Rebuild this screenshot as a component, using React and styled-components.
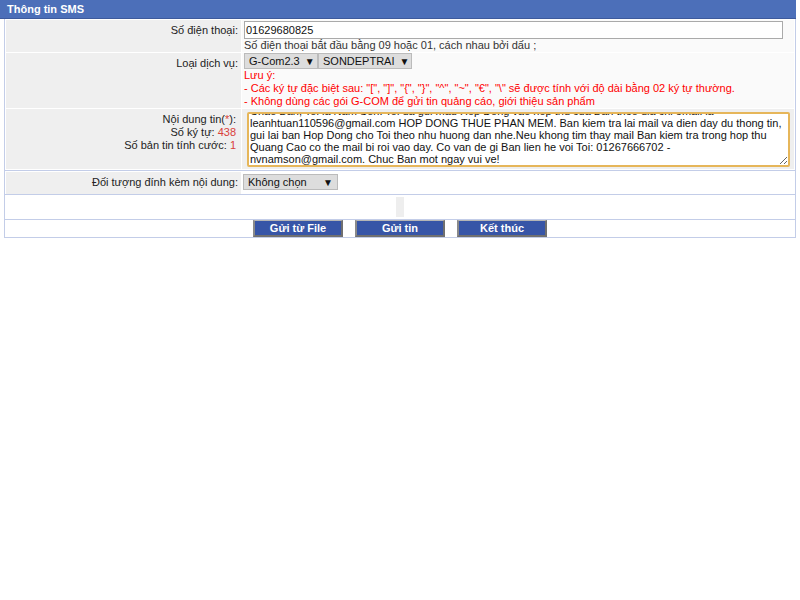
import React from 'react';
import styled, { createGlobalStyle } from 'styled-components';

const GlobalStyle = createGlobalStyle`
  body {
    margin: 0;
    background: #ffffff;
    font-family: 'Liberation Sans', Arial, sans-serif;
    font-size: 11px;
    color: #222;
  }
`;

const Header = styled.div`
  width: 796px;
  height: 19px;
  box-sizing: border-box;
  background-color: #4c6fb9;
  border-bottom: 1px solid #3d5a9c;
  color: #ffffff;
  font-weight: bold;
  font-size: 11px;
  line-height: 18px;
  padding-left: 7px;
`;

const Panel = styled.div`
  margin-left: 4px;
  width: 792px;
  box-sizing: border-box;
  border-left: 1px solid #c3cde8;
  border-right: 1px solid #c3cde8;
`;

const Section = styled.div`
  display: grid;
  grid-template-columns: 235px 1fr;
  gap: 1px;
  padding: ${(props) => props.pad || '1px'};
  border-bottom: 1px solid #c3cde8;
`;

const LabelCell = styled.div`
  background-color: #efefef;
  text-align: right;
  padding: ${(props) => props.pad || '4px 3px 0 0'};
  line-height: 13px;
`;

const ValueCell = styled.div`
  background-color: ${(props) => props.bg || '#fafafa'};
  padding: ${(props) => props.pad || '1px 0 0 2px'};
  line-height: 13px;
`;

const PhoneInput = styled.input`
  display: block;
  width: 539px;
  height: 18px;
  box-sizing: border-box;
  border: 1px solid #aaaaaa;
  padding: 0 1px;
  font-family: 'Liberation Sans', Arial, sans-serif;
  font-size: 11px;
  color: #111;
  background: #fff;
  outline: none;
`;

const Hint = styled.div`
  color: #333;
`;

const SelectRow = styled.div`
  display: flex;
`;

const FakeSelect = styled.div`
  display: flex;
  align-items: center;
  justify-content: space-between;
  gap: 5px;
  height: 16px;
  box-sizing: border-box;
  width: ${(props) => props.w}px;
  padding: 0 4px;
  background-color: #dddddd;
  border: 1px solid #bbbbbb;
  color: #111;
  font-size: 11px;
  white-space: nowrap;
`;

const Arrow = styled.span`
  font-size: 10px;
`;

const Warn = styled.div`
  color: #ff0000;
`;

const Red = styled.span`
  color: #d9413a;
`;

const MessageBox = styled.textarea`
  display: block;
  width: 543px;
  height: 55px;
  box-sizing: border-box;
  margin: 3px 0 0 5px;
  border: 2px solid #e6b65a;
  border-radius: 2px;
  padding: 1px 1px;
  font-family: 'Liberation Sans', Arial, sans-serif;
  font-size: 11px;
  line-height: 12px;
  color: #111;
  background: #fff;
  overflow: hidden;
  resize: both;
  outline: none;
  white-space: pre;
`;

const Spacer = styled.div`
  display: flex;
  justify-content: center;
  padding: 2px 0;
  border-bottom: 1px solid #c3cde8;
`;

const Blank = styled.div`
  width: 8px;
  height: 20px;
  background-color: #eeeeee;
`;

const ButtonBar = styled.div`
  display: flex;
  justify-content: center;
  gap: 12px;
  border-bottom: 1px solid #c3cde8;
`;

const Button = styled.button`
  width: 90px;
  height: 17px;
  box-sizing: border-box;
  padding: 0;
  background-color: #3755a7;
  color: #ffffff;
  font-family: 'Liberation Sans', Arial, sans-serif;
  font-weight: bold;
  font-size: 11px;
  border-style: solid;
  border-width: 1px 2px 2px 2px;
  border-color: #b5b5b5 #6f6f6f #707070 #8a8a8a;
  cursor: pointer;
`;

const specialChars = '- Các ký tự đặc biệt sau: "[", "]", "{", "}", "^", "~", "€", "\\" sẽ được tính với độ dài bằng 02 ký tự thường.';

const message =
  'Chao Ban, Toi la Nam Son. Toi da gui mau Hop Dong vao hop thu cua Ban theo dia chi email la\n' +
  'leanhtuan110596@gmail.com HOP DONG THUE PHAN MEM. Ban kiem tra lai mail va dien day du thong tin,\n' +
  'gui lai ban Hop Dong cho Toi theo nhu huong dan nhe.Neu khong tim thay mail Ban kiem tra trong hop thu\n' +
  'Quang Cao co the mail bi roi vao day. Co van de gi Ban lien he voi Toi: 01267666702 -\n' +
  'nvnamson@gmail.com. Chuc Ban mot ngay vui ve!';

function App() {
  const boxRef = React.useRef(null);

  React.useEffect(() => {
    if (boxRef.current) boxRef.current.scrollTop = 10;
  }, []);

  return (
    <>
      <GlobalStyle />
      <Header>Thông tin SMS</Header>
      <Panel>
        <Section>
          <LabelCell>Số điện thoại:</LabelCell>
          <ValueCell>
            <PhoneInput defaultValue="01629680825" />
            <Hint>Số điện thoại bắt đầu bằng 09 hoặc 01, cách nhau bởi dấu ;</Hint>
          </ValueCell>

          <LabelCell>Loại dịch vụ:</LabelCell>
          <ValueCell pad="0 0 0 2px">
            <SelectRow>
              <FakeSelect w={74}>
                G-Com2.3 <Arrow>▼</Arrow>
              </FakeSelect>
              <FakeSelect w={94}>
                SONDEPTRAI <Arrow>▼</Arrow>
              </FakeSelect>
            </SelectRow>
            <Warn>Lưu ý:</Warn>
            <Warn>{specialChars}</Warn>
            <Warn>- Không dùng các gói G-COM để gửi tin quảng cáo, giới thiệu sản phẩm</Warn>
          </ValueCell>

          <LabelCell pad="4px 5px 3px 0">
            <div>Nội dung tin(<Red>*</Red>):</div>
            <div>Số ký tự: <Red>438</Red></div>
            <div>Số bản tin tính cước: <Red>1</Red></div>
          </LabelCell>
          <ValueCell bg="#efefef" pad="0 0 2px 0">
            <MessageBox ref={boxRef} defaultValue={message} spellCheck={false} />
          </ValueCell>
        </Section>

        <Section pad="1px 1px 0">
          <LabelCell pad="4px 3px 5px 0">Đối tượng đính kèm nội dung:</LabelCell>
          <ValueCell pad="2px 0 0 1px" bg="#ffffff">
            <FakeSelect w={95}>
              Không chọn <Arrow>▼</Arrow>
            </FakeSelect>
          </ValueCell>
        </Section>

        <Spacer>
          <Blank />
        </Spacer>

        <ButtonBar>
          <Button>Gửi từ File</Button>
          <Button>Gửi tin</Button>
          <Button>Kết thúc</Button>
        </ButtonBar>
      </Panel>
    </>
  );
}

export default App;
